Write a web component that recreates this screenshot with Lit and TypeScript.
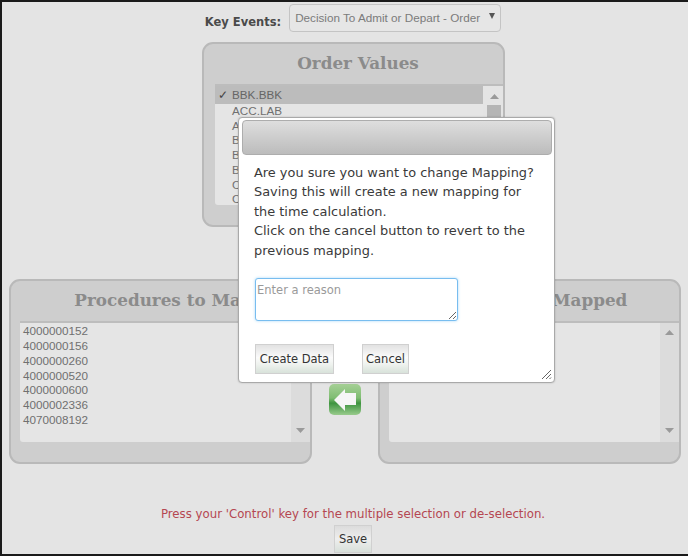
import { LitElement, html, css } from "lit";
import { customElement } from "lit/decorators.js";

const SANS = css`"DejaVu Sans", Verdana, sans-serif`;

const scrollbar = (thumb: boolean) => html`
  <div class="sb ${thumb ? "sb-order" : ""}">
    <svg class="arr" width="9" height="5" viewBox="0 0 9 5"><path d="M0 5 L4.5 0 L9 5Z" fill="#9a9a9a"/></svg>
    ${thumb ? html`<div class="thumb"></div>` : html`<div class="grow"></div>`}
    ${thumb ? html`` : html`<svg class="arr" width="9" height="5" viewBox="0 0 9 5"><path d="M0 0 L4.5 5 L9 0Z" fill="#9a9a9a"/></svg>`}
  </div>`;

@customElement("app-root")
export class AppRoot extends LitElement {
  static styles = css`
    :host {
      display: block;
      position: relative;
      width: 688px;
      height: 556px;
      box-sizing: border-box;
      border-top: 2px solid #1a1a1a;
      border-left: 2px solid #1a1a1a;
      border-bottom: 2px solid #1a1a1a;
      background: #e4e4e4;
      overflow: hidden;
      font-family: "Liberation Sans", Arial, sans-serif;
    }
    .page { display: flex; flex-direction: column; height: 100%; }
    .key { display: flex; justify-content: center; align-items: center; gap: 8px; padding: 2px 0 0 16px; height: 28px; }
    .key label { font: bold 11.5px ${SANS}; color: #4a4a4a; padding-top: 8px; }
    .select {
      width: 212px; height: 28px; box-sizing: border-box;
      border: 1px solid #c4c4c4; border-radius: 4px; background: #e6e6e6;
      display: flex; align-items: center; justify-content: space-between;
      padding: 0 5px 2px 5px; font-size: 11.7px; color: #7b7b7b;
    }
    .caret { width: 0; height: 0; border-left: 3px solid transparent; border-right: 3px solid transparent; border-top: 6px solid #555; margin-bottom: 2px; }
    .panel {
      --inset: 11px;
      box-sizing: border-box; width: 303px; height: 185px;
      background: #cecece; border: 2px solid #b9b9b9; border-radius: 11px;
      display: flex; flex-direction: column; padding: 0 0 20px var(--inset);
    }
    .proc { --inset: 9px; }
    .order { align-self: center; margin: 10px 0 0 16px; }
    .panel h2 {
      margin: 0 0 0 calc(-1 * var(--inset)); height: 40px; text-align: center; white-space: nowrap;
      font: bold 16.8px/39px "DejaVu Serif", Georgia, serif; color: #8b8b8b;
    }
    .order h2 { padding-left: 10px; }
    .proc h2 { padding-left: 6px; }
    .proc.right h2 { padding-left: 8px; }
    .list {
      flex: 1; display: flex; background: #e5e5e5;
      border-top: 2px solid #bdbdbd; border-radius: 0 0 0 3px; min-height: 0; overflow: hidden;
    }
    .rows { flex: 1; min-width: 0; font-size: 11.7px; line-height: 14.7px; color: #707070; overflow: hidden; }
    .proc .rows { padding: 1px 0 0 3px; line-height: 14.85px; }
    .row { padding-left: 17.5px; white-space: nowrap; }
    .row.sel { background: #bcbcbc; height: 18px; line-height: 18px; position: relative; color: #666; }
    .row.sel span { position: absolute; left: 3px; top: 0; color: #444; }
    .sb { width: 19px; flex: none; background: #dcdcdc; display: flex; flex-direction: column; align-items: center; padding: 7px 0 9px; box-sizing: border-box; }
    .sb-order { width: 20px; background: #e4e4e4; padding: 8px 0 0 3px; }
    .arr { flex: none; }
    .grow { flex: 1; }
    .thumb { flex: none; width: 14px; height: 30px; margin-top: 6px; background: #b5b5b5; }
    .middle { display: grid; grid-template-columns: 303px 1fr 303px; margin: 52px 7px 0 7px; }
    .mover { display: flex; justify-content: center; padding-top: 105px; }
    .mover svg { display: block; }
    .hint { margin: 42px 0 0 0; text-align: center; font: 11.76px/16px ${SANS}; color: #b54752; padding-left: 16px; }
    .actions { display: flex; justify-content: center; padding: 3px 0 0 16px; }
    button {
      font: 11.5px ${SANS}; color: #333; box-sizing: border-box; padding: 0;
      border: 1px solid #d0d0d0;
      background: linear-gradient(#e2e2e2, #fbfbfb 45%, #eef2ee 70%, #d8e2da);
    }
    .save { width: 38px; height: 28px; background: linear-gradient(#dcdcdc, #eeeeee 50%, #d8e0da); }
    .dialog {
      position: absolute; left: 236px; top: 115px; width: 317px; height: 266px;
      box-sizing: border-box; background: #fff; border: 1px solid #a9a9a9; border-radius: 4px;
      padding: 2px 2px 0 3px; display: flex; flex-direction: column;
      box-shadow: 0 0 2px rgba(0,0,0,.2);
    }
    .dh { height: 35px; flex: none; border: 1px solid #adadad; border-radius: 4px; background: linear-gradient(#dedede, #bcbcbc); box-sizing: border-box; }
    .dialog p { margin: 0; padding: 8px 10px 0 12px; font: 12.9px/19.4px ${SANS}; color: #3a3a3a; white-space: nowrap; }
    textarea {
      display: block; box-sizing: border-box; width: 203px; height: 43px; margin: 18px 0 0 13px;
      border: 1px solid #78bdef; border-radius: 3px; outline: none; padding: 4px 1px;
      font: 11.5px ${SANS}; box-shadow: 0 0 3px #a9d8f8; background: #fff;
    }
    textarea::placeholder { color: #9a9a9a; }
    .btns { display: flex; gap: 28px; padding: 23px 0 0 13px; }
    .btns button { height: 30px; }
    .create { width: 79px; }
    .cancel { width: 47px; }
    .grip { position: absolute; right: 2px; bottom: 2px; }
  `;

  render() {
    const procs = ["4000000152", "4000000156", "4000000260", "4000000520", "4000000600", "4000002336", "4070008192"];
    const orders = ["A", "B", "B", "B", "C", "C"];
    return html`
      <div class="page">
        <div class="key">
          <label>Key Events:</label>
          <div class="select"><span>Decision To Admit or Depart - Order</span><i class="caret"></i></div>
        </div>
        <section class="panel order">
          <h2>Order Values</h2>
          <div class="list">
            <div class="rows">
              <div class="row sel"><span>✓</span>BBK.BBK</div>
              <div class="row">ACC.LAB</div>
              ${orders.map((o) => html`<div class="row">${o}</div>`)}
            </div>
            ${scrollbar(true)}
          </div>
        </section>
        <div class="middle">
          <section class="panel proc">
            <h2>Procedures to Map</h2>
            <div class="list">
              <div class="rows">${procs.map((p) => html`<div>${p}</div>`)}</div>
              ${scrollbar(false)}
            </div>
          </section>
          <div class="mover">
            <svg width="32" height="31" viewBox="0 0 32 31">
              <defs><linearGradient id="g" x1="0" y1="0" x2="0" y2="1">
                <stop offset="0" stop-color="#a6d096"/><stop offset=".45" stop-color="#7fbd72"/>
                <stop offset=".62" stop-color="#3f9440"/><stop offset="1" stop-color="#98cb8c"/>
              </linearGradient></defs>
              <rect width="32" height="31" rx="5" fill="url(#g)"/>
              <path d="M5 16 L16 5 L16 9 L27 9 L27 21 L16 21 L16 27Z" fill="#f6f6f6"/>
            </svg>
          </div>
          <section class="panel proc right">
            <h2>Procedures Mapped</h2>
            <div class="list">
              <div class="rows"></div>
              ${scrollbar(false)}
            </div>
          </section>
        </div>
        <div class="hint">Press your 'Control' key for the multiple selection or de-selection.</div>
        <div class="actions"><button class="save">Save</button></div>
      </div>
      <div class="dialog">
        <div class="dh"></div>
        <p>Are you sure you want to change Mapping?<br>Saving this will create a new mapping for<br>the time calculation.<br>Click on the cancel button to revert to the<br>previous mapping.</p>
        <textarea placeholder="Enter a reason"></textarea>
        <div class="btns">
          <button class="create">Create Data</button>
          <button class="cancel">Cancel</button>
        </div>
        <svg class="grip" width="11" height="11" viewBox="0 0 11 11"><path d="M1 10 L10 1 M5 10 L10 5 M8.5 10 L10 8.5" stroke="#666" fill="none"/></svg>
      </div>
    `;
  }
}
